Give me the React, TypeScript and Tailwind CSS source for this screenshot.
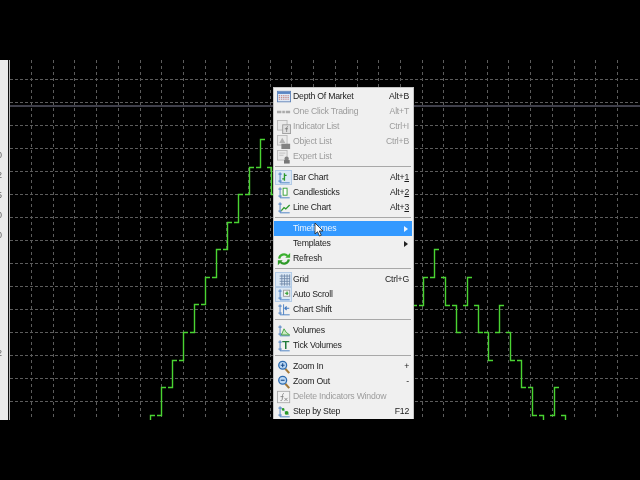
const XS = Array.from({ length: 28 }, (_, i) => 31 + i * 21.7);
const YS = Array.from({ length: 15 }, (_, i) => 79 + i * 23);

// x, open, close
const BARS: [number, number, number][] = [
  [150, 442, 415], [161, 415, 387], [172, 387, 360], [183, 360, 332], [194, 332, 304], [205, 304, 277],
  [216, 277, 249], [227, 249, 222], [238, 222, 194], [249, 194, 167], [260, 167, 139], [271, 167, 194],
  [412, 332, 305], [423, 305, 277], [434, 277, 249], [445, 277, 305], [456, 305, 332], [467, 305, 277],
  [478, 305, 332], [488, 332, 360], [499, 332, 305], [510, 332, 360], [521, 360, 387], [532, 387, 415],
  [543, 415, 442], [554, 415, 387], [565, 415, 442],
];

const AXIS = "M3.5 1.5v12h11M1.5 3.5h4M1.5 11.5h4";

const ICONS: Record<string, React.ReactNode> = {
  depth: (
    <>
      <rect x="0.5" y="1.5" width="15" height="12" fill="#dfe8f5" stroke="#5b7fb5" />
      <rect x="1" y="2" width="14" height="2.500" fill="#5b86c4" />
      <path d="M2 6.500h12M2 8.500h12M2 10.500h12" stroke="#c0736f" strokeDasharray="1.500 1" />
    </>
  ),
  oneclick: <path d="M0 8h5M6 8h3M10 8h5" stroke="#8d8d8d" strokeWidth="3" />,
  indicator: (
    <>
      <rect x="0.5" y="0.5" width="11" height="11" fill="#e8e8e8" stroke="#a0a0a0" />
      <rect x="6.500" y="5.500" width="9" height="10" fill="#d8d8d8" stroke="#777" />
      <path d="M12.500 7.500c-1.500 0-1.500 1-1.500 6M9 10h3.500" stroke="#444" fill="none" />
    </>
  ),
  object: (
    <>
      <rect x="0.5" y="0.5" width="11" height="11" fill="#e8e8e8" stroke="#a0a0a0" />
      <path d="M2.500 9l3.500-6 3.500 6z" fill="#999" />
      <rect x="5" y="10" width="10" height="6" fill="#555" />
    </>
  ),
  expert: (
    <>
      <rect x="0.5" y="0.5" width="11" height="11" fill="#e8e8e8" stroke="#a0a0a0" />
      <path d="M2.500 3.500h7M2.500 6h5" stroke="#aaa" />
      <circle cx="11" cy="10" r="2.500" fill="#555" />
      <rect x="8" y="11.500" width="6.500" height="4" fill="#444" />
    </>
  ),
  bar: (
    <>
      <path d={AXIS} stroke="#3f78c0" fill="none" />
      <path d="M8.500 2.500v8.500M6 9h2.500M8.500 5H11" stroke="#2a9a2a" fill="none" strokeWidth="1.500" />
    </>
  ),
  candle: (
    <>
      <path d={AXIS} stroke="#3f78c0" fill="none" />
      <rect x="7" y="2.500" width="4.500" height="8" fill="#fff" stroke="#2a9a2a" />
    </>
  ),
  line: (
    <>
      <path d={AXIS} stroke="#3f78c0" fill="none" />
      <path d="M5 11l3-3.500 2 1.500L14.500 4.500" stroke="#2a9a2a" fill="none" strokeWidth="1.500" />
    </>
  ),
  refresh: (
    <>
      <path d="M2.500 7.500a5.500 5.500 0 0 1 9.500-3" stroke="#3bb02f" strokeWidth="2.600" fill="none" />
      <path d="M9.500 6.500h5.500v-5.500z" fill="#3bb02f" />
      <path d="M13.500 8.500a5.500 5.500 0 0 1-9.500 3" stroke="#2e9a28" strokeWidth="2.600" fill="none" />
      <path d="M6.500 9.500h-5.500v5.500z" fill="#2e9a28" />
    </>
  ),
  grid: (
    <path d="M3 3.500h12M3 6.500h12M3 9.500h12M3 12.500h12M5.500 1.500v13M8.500 1.500v13M11.500 1.500v13M14.500 1.500v13" stroke="#6f88a8" strokeWidth="1" />
  ),
  scroll: (
    <>
      <path d={AXIS} stroke="#3f78c0" fill="none" />
      <rect x="7.500" y="2.500" width="7" height="7" fill="#f4f4f4" stroke="#999" />
      <path d="M9 6h4M11.500 4v4" stroke="#2a9a2a" strokeWidth="1.400" />
    </>
  ),
  shift: (
    <>
      <path d="M3.500 1.500v12h11M1.500 3.500h4M1.500 11.500h4M7.500 1.500v12" stroke="#3f78c0" fill="none" />
      <path d="M9 6h5M11 4l-2 2 2 2" stroke="#3f78c0" fill="none" strokeWidth="1.300" />
    </>
  ),
  volumes: (
    <>
      <path d={AXIS} stroke="#3f78c0" fill="none" />
      <path d="M5 12.500l3-7 2.500 4 4 3z" fill="#cdeac4" stroke="#3ba03b" />
    </>
  ),
  tick: (
    <>
      <path d={AXIS} stroke="#3f78c0" fill="none" />
      <path d="M6 3h8M10 3v8.500" stroke="#1f7a3a" strokeWidth="1.700" />
    </>
  ),
  zoomin: (
    <>
      <path d="M9.500 10l4.500 5" stroke="#a57a3a" strokeWidth="2.400" />
      <circle cx="6.500" cy="6" r="4.500" fill="#bcd8f4" stroke="#2f6cb0" strokeWidth="1.500" />
      <path d="M4.300 6h4.400M6.500 3.800v4.400" stroke="#1c4f8f" strokeWidth="1.300" />
    </>
  ),
  zoomout: (
    <>
      <path d="M9.500 10l4.500 5" stroke="#a57a3a" strokeWidth="2.400" />
      <circle cx="6.500" cy="6" r="4.500" fill="#bcd8f4" stroke="#2f6cb0" strokeWidth="1.500" />
      <path d="M4.300 6h4.400" stroke="#1c4f8f" strokeWidth="1.300" />
    </>
  ),
  remove: (
    <>
      <rect x="0.5" y="1.500" width="14" height="13" fill="#f4f4f4" stroke="#8a8a8a" />
      <path d="M8 4c-2 0-1.500 2-2 6.500-.2 1.500-1 2-2 1.500M4 7.500h3.500M8.500 9l3.500 3.500M12 9l-3.500 3.500" stroke="#555" fill="none" />
    </>
  ),
  step: (
    <>
      <path d={AXIS} stroke="#3f78c0" fill="none" />
      <path d="M5 3.500l9 8" stroke="#3f78c0" strokeDasharray="2 1" />
      <circle cx="11" cy="9" r="2.200" fill="#2a9a2a" />
      <circle cx="7" cy="5" r="1.500" fill="#2a9a2a" />
    </>
  ),
};

type Item = { icon?: string; label: string; keys?: React.ReactNode; off?: boolean; checked?: boolean; active?: boolean; arrow?: boolean };

const GROUPS: Item[][] = [
  [
    { icon: "depth", label: "Depth Of Market", keys: "Alt+B" },
    { icon: "oneclick", label: "One Click Trading", keys: "Alt+T", off: true },
    { icon: "indicator", label: "Indicator List", keys: "Ctrl+I", off: true },
    { icon: "object", label: "Object List", keys: "Ctrl+B", off: true },
    { icon: "expert", label: "Expert List", off: true },
  ],
  [
    { icon: "bar", label: "Bar Chart", keys: <>Alt+<u>1</u></>, checked: true },
    { icon: "candle", label: "Candlesticks", keys: <>Alt+<u>2</u></> },
    { icon: "line", label: "Line Chart", keys: <>Alt+<u>3</u></> },
  ],
  [
    { label: "Timeframes", active: true, arrow: true },
    { label: "Templates", arrow: true },
    { icon: "refresh", label: "Refresh" },
  ],
  [
    { icon: "grid", label: "Grid", keys: "Ctrl+G", checked: true },
    { icon: "scroll", label: "Auto Scroll", checked: true },
    { icon: "shift", label: "Chart Shift" },
  ],
  [
    { icon: "volumes", label: "Volumes" },
    { icon: "tick", label: "Tick Volumes" },
  ],
  [
    { icon: "zoomin", label: "Zoom In", keys: "+" },
    { icon: "zoomout", label: "Zoom Out", keys: "-" },
    { icon: "remove", label: "Delete Indicators Window", off: true },
    { icon: "step", label: "Step by Step", keys: "F12" },
  ],
];

function Row({ item }: { item: Item }) {
  const tone = item.active ? "bg-[#3399ff] text-[#eef6ff]" : item.off ? "text-[#9c9c9c]" : "text-[#1c1c1c]";
  return (
    <div className={`flex h-[15px] items-center ${tone}`}>
      <div className={`ml-px flex h-[15px] w-[17px] shrink-0 items-center justify-center ${item.checked ? "bg-[#dbe8f5] outline outline-[#b3cbe6] -outline-offset-1" : ""}`}>
        {item.icon && (
          <svg width="14" height="14" viewBox="0 0 16 16" className={item.off ? "opacity-70" : ""}>
            {ICONS[item.icon]}
          </svg>
        )}
      </div>
      <span className="ml-[1px] flex-1 whitespace-nowrap">{item.label}</span>
      {item.keys && <span className="mr-[3px] whitespace-nowrap">{item.keys}</span>}
      {item.arrow && (
        <svg width="4" height="6" viewBox="0 0 4 6" className="mr-[4px]">
          <path d="M0 0l4 3-4 3z" fill={item.active ? "#eef6ff" : "#222"} />
        </svg>
      )}
    </div>
  );
}

export default function App() {
  return (
    <div className="flex h-[480px] w-[640px] flex-col overflow-hidden bg-black font-['Liberation_Sans',sans-serif] blur-[0.35px]">
      <div className="h-[60px]" />
      <div className="flex h-[360px]">
        <div className="flex w-[8px] flex-col bg-[#ececec] pt-[85px] text-[9px] leading-[20px] text-[#666]">
          {["0", "2", "5", "0", "0"].map((d, i) => (
            <div key={i} className="flex h-[20px] w-[2px] justify-end overflow-hidden">{d}</div>
          ))}
          <div className="mt-[98px] flex h-[20px] w-[2px] justify-end overflow-hidden">2</div>
        </div>
        <div className="w-px bg-[#111]" />
        <div className="w-px bg-[#b5b5b5]" />
        <div className="relative flex-1">
          <svg width="630" height="360" viewBox="10 60 630 360" className="block">
            {XS.map((x) => (
              <line key={x} x1={Math.round(x) + 0.5} x2={Math.round(x) + 0.5} y1="60" y2="420" stroke="#5c5c5c" strokeDasharray="3 3" />
            ))}
            {YS.map((y) => (
              <line key={y} x1="10" x2="640" y1={y + 0.5} y2={y + 0.5} stroke="#5c5c5c" strokeDasharray="3 2" />
            ))}
            <rect x="10" y="105" width="630" height="2" fill="#3f3f4a" />
            {BARS.map(([x, o, c]) => (
              <path
                key={x}
                d={`M${x - 4} ${o + 0.5}H${x + 0.5}V${c + 0.5}H${x + 5}`}
                fill="none"
                stroke="#4ad432"
                strokeWidth="1.400"
              />
            ))}
          </svg>
          {/* context menu */}
          <div className="absolute left-[263px] top-[27px] w-[141px] border-x border-t border-[#c4c4c4] bg-[#f0f0f0] pt-[1px] pr-[1px] text-[8.7px] tracking-[-0.22px]">
            {GROUPS.map((group, i) => (
              <div key={i}>
                {i > 0 && <div className="mx-px mt-[2px] mb-[3px] h-px bg-[#a8a8a8]" />}
                {group.map((item) => (
                  <Row key={item.label} item={item} />
                ))}
              </div>
            ))}
          </div>
          {/* mouse pointer */}
          <svg width="10" height="15" viewBox="0 0 10 15" className="absolute left-[304px] top-[162px]">
            <path d="M1 1v11l2.500-2.300 2 4.300 1.800-.8-2-4.200H9z" fill="#fff" stroke="#222" strokeWidth="0.8" />
          </svg>
        </div>
      </div>
    </div>
  );
}
